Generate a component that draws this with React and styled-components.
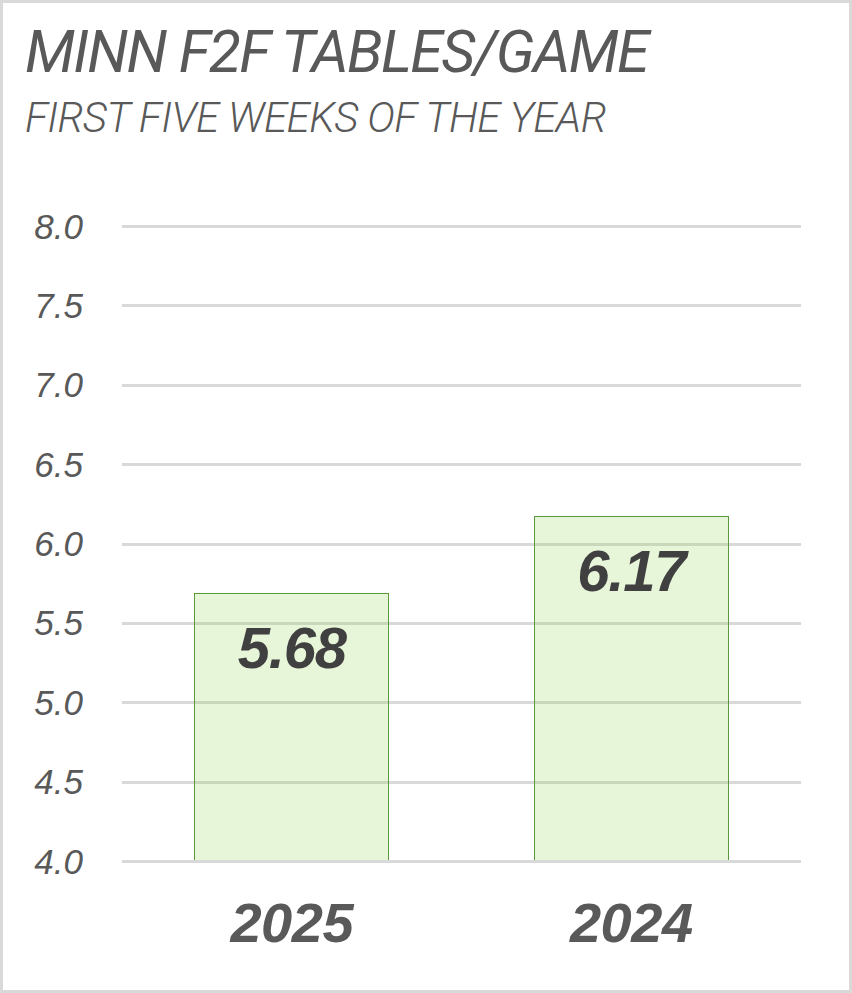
import React from "react";
import styled, { createGlobalStyle } from "styled-components";

const Global = createGlobalStyle`
  html, body { margin: 0; padding: 0; background: #ffffff; }
  * { box-sizing: border-box; }
`;

const Card = styled.div`
  width: 852px;
  height: 993px;
  border: 3px solid #d9d9d9;
  background: #ffffff;
  display: flex;
  flex-direction: column;
  color: #595959;
`;

const Header = styled.header`
  padding: 19px 0 0 22px;
  display: flex;
  flex-direction: column;
  gap: 16px;
`;

const Title = styled.h1`
  margin: 0;
  font-family: Roboto, "Liberation Sans", sans-serif;
  font-style: italic;
  font-weight: 400;
  font-size: 59px;
  line-height: 1;
  letter-spacing: -1.6px;
  color: #595959;
`;

const Subtitle = styled.h2`
  margin: 0;
  font-family: Roboto, "Liberation Sans", sans-serif;
  font-style: italic;
  font-weight: 300;
  font-size: 42px;
  line-height: 1;
  letter-spacing: -0.6px;
  color: #595959;
`;

const ChartGrid = styled.div`
  margin-top: 86px;
  display: grid;
  grid-template-columns: 119px 679px;
  grid-template-rows: 638px auto;
  row-gap: 32px;
`;

const YAxis = styled.div`
  display: flex;
  flex-direction: column;
  justify-content: space-between;
  padding-right: 39px;
`;

const Tick = styled.div`
  height: 3px;
  display: flex;
  align-items: center;
  justify-content: flex-end;
  font-family: "Liberation Sans", Arial, sans-serif;
  font-style: italic;
  font-size: 35px;
  color: #595959;
  white-space: nowrap;
`;

const Plot = styled.div`
  position: relative;
`;

const GridLines = styled.div`
  position: absolute;
  inset: 0;
  display: flex;
  flex-direction: column;
  justify-content: space-between;
`;

const GridLine = styled.div`
  height: 3px;
  background: #d9d9d9;
`;

const Bars = styled.div`
  position: absolute;
  inset: 0 0 3px 0;
  display: grid;
  grid-template-columns: 1fr 1fr;
  align-items: end;
`;

const Slot = styled.div`
  height: 100%;
  display: flex;
  align-items: flex-end;
  justify-content: center;
`;

const Bar = styled.div`
  width: 195px;
  background: rgba(146, 208, 80, 0.22);
  border: 1px solid #5b9a3a;
  border-bottom: none;
  display: flex;
  justify-content: center;
  padding-top: 25px;
`;

const Value = styled.span`
  font-family: "Liberation Sans", Arial, sans-serif;
  font-style: italic;
  font-weight: 700;
  font-size: 58px;
  line-height: 1;
  letter-spacing: -1.2px;
  color: #404040;
`;

const Categories = styled.div`
  grid-column: 2;
  display: grid;
  grid-template-columns: 1fr 1fr;
`;

const Category = styled.div`
  text-align: center;
  font-family: "Liberation Sans", Arial, sans-serif;
  font-style: italic;
  font-weight: 700;
  font-size: 56px;
  line-height: 1;
  letter-spacing: -0.5px;
  color: #595959;
`;

const ticks = ["8.0", "7.5", "7.0", "6.5", "6.0", "5.5", "5.0", "4.5", "4.0"];
const data = [
  { label: "2025", value: 5.68 },
  { label: "2024", value: 6.17 },
];
const MIN = 4;
const MAX = 8;

export default function App() {
  return (
    <>
      <Global />
      <Card>
        <Header>
          <Title>MINN F2F TABLES/GAME</Title>
          <Subtitle>FIRST FIVE WEEKS OF THE YEAR</Subtitle>
        </Header>
        <ChartGrid>
          <YAxis>
            {ticks.map((t) => (
              <Tick key={t}>{t}</Tick>
            ))}
          </YAxis>
          <Plot>
            <GridLines>
              {ticks.map((t) => (
                <GridLine key={t} />
              ))}
            </GridLines>
            <Bars>
              {data.map((d) => (
                <Slot key={d.label}>
                  <Bar style={{ height: `${((d.value - MIN) / (MAX - MIN)) * 100}%` }}>
                    <Value>{d.value.toFixed(2)}</Value>
                  </Bar>
                </Slot>
              ))}
            </Bars>
          </Plot>
          <Categories>
            {data.map((d) => (
              <Category key={d.label}>{d.label}</Category>
            ))}
          </Categories>
        </ChartGrid>
      </Card>
    </>
  );
}
